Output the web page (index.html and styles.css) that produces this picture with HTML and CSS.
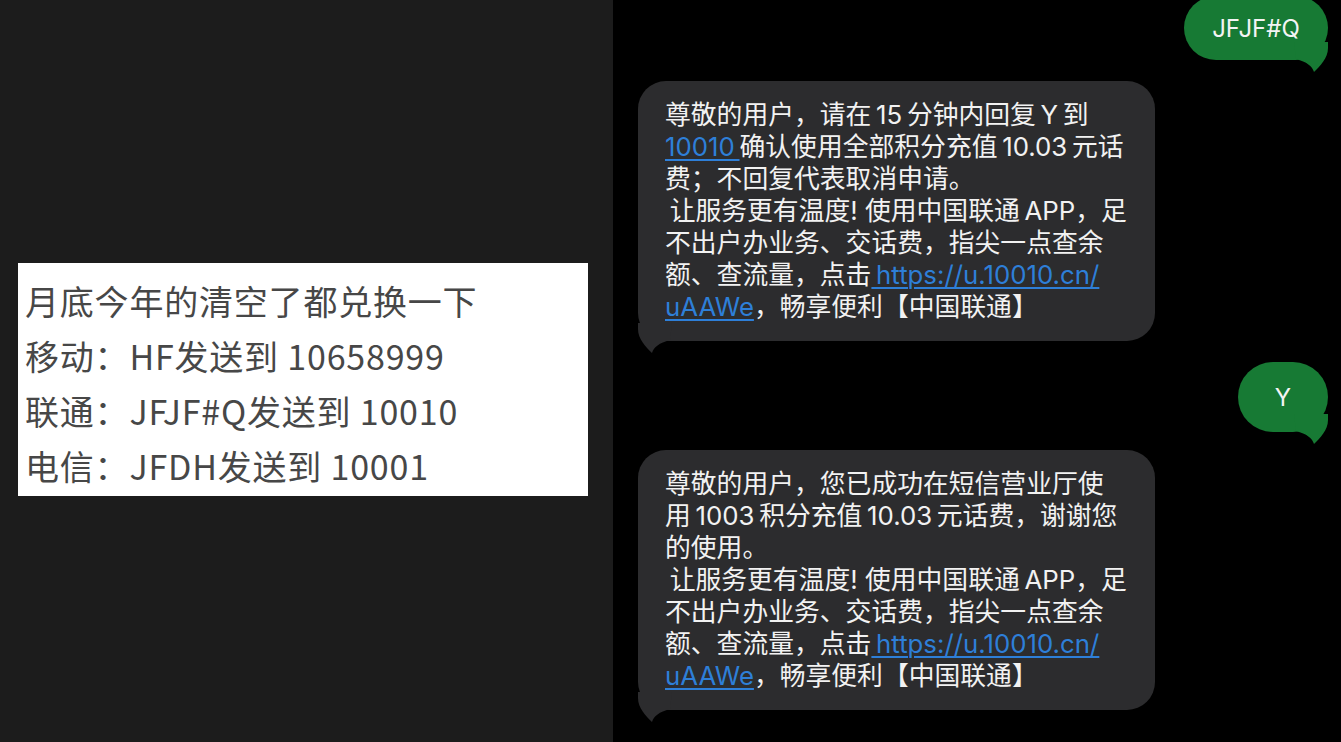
FILE: index.html
```html
<!DOCTYPE html>
<html lang="zh-CN">
<head>
    <meta charset="UTF-8">
    <meta name="viewport" content="width=device-width, initial-scale=1.0">
    <title>积分兑换话费</title>
    <link rel="stylesheet" href="styles.css">
</head>
<body>
    <div class="page">
        <div class="left-panel">
            <div class="note">
                <p>月底今年的清空了都兑换一下</p>
                <p>移动：HF发送到 10658999</p>
                <p>联通：JFJF#Q发送到 10010</p>
                <p>电信：JFDH发送到 10001</p>
            </div>
        </div>

        <div class="chat">
            <div class="bubble out out-first">
                JFJF#Q
                <svg class="tail tail-out" width="34" height="30" viewBox="0 0 34 30"><path d="M34 0 L34 6 C34 16 26 24 20 30 C18 24 13 20 2 17 L0 0 Z"/></svg>
            </div>

            <div class="bubble in">
                <span class="line">尊敬的用户，请在&thinsp;15&thinsp;分钟内回复&thinsp;Y&thinsp;到</span>
                <span class="line"><a href="#">10010&thinsp;</a>确认使用全部积分充值&thinsp;10.03&thinsp;元话</span>
                <span class="line">费；不回复代表取消申请。</span>
                <span class="line">&thinsp;让服务更有温度! 使用中国联通&thinsp;APP，足</span>
                <span class="line">不出户办业务、交话费，指尖一点查余</span>
                <span class="line">额、查流量，点击<a href="#">&thinsp;https://u.10010.cn/</a></span>
                <span class="line"><a href="#">uAAWe</a>，畅享便利【中国联通】</span>
                <svg class="tail tail-in" width="34" height="30" viewBox="0 0 34 30"><path d="M0 0 L0 6 C0 16 8 24 14 30 C16 24 21 20 32 17 L34 0 Z"/></svg>
            </div>

            <div class="bubble out out-second">
                Y
                <svg class="tail tail-out" width="34" height="30" viewBox="0 0 34 30"><path d="M34 0 L34 6 C34 16 26 24 20 30 C18 24 13 20 2 17 L0 0 Z"/></svg>
            </div>

            <div class="bubble in in-second">
                <span class="line">尊敬的用户，您已成功在短信营业厅使</span>
                <span class="line">用&thinsp;1003&thinsp;积分充值&thinsp;10.03&thinsp;元话费，谢谢您</span>
                <span class="line">的使用。</span>
                <span class="line">&thinsp;让服务更有温度! 使用中国联通&thinsp;APP，足</span>
                <span class="line">不出户办业务、交话费，指尖一点查余</span>
                <span class="line">额、查流量，点击<a href="#">&thinsp;https://u.10010.cn/</a></span>
                <span class="line"><a href="#">uAAWe</a>，畅享便利【中国联通】</span>
                <svg class="tail tail-in" width="34" height="30" viewBox="0 0 34 30"><path d="M0 0 L0 6 C0 16 8 24 14 30 C16 24 21 20 32 17 L34 0 Z"/></svg>
            </div>
        </div>
    </div>
</body>
</html>
```

FILE: styles.css
```css
body {
    margin: 0;
    background-color: #000;
    font-family: "Inter", "Noto Sans CJK SC", sans-serif;
    overflow: hidden;
}
.page {
    display: flex;
    height: 742px;
}

/* captura de la izquierda */
.left-panel {
    width: 613px;
    flex-shrink: 0;
    background-color: #1c1c1c;
    padding: 263px 25px 0 18px;
    box-sizing: border-box;
}
.note {
    background-color: #fff;
    height: 233px;
    padding: 10px 0 0 7px;
    box-sizing: border-box;
}
.note p {
    margin: 0;
    font-family: "Noto Sans CJK SC", sans-serif;
    font-size: 34px;
    line-height: 55px;
    color: #474747;
    letter-spacing: 0.8px;
    white-space: nowrap;
}

/* conversación */
.chat {
    flex: 1;
    display: flex;
    flex-direction: column;
    align-items: flex-start;
    padding: 0 13px 0 25px;
}
.bubble {
    position: relative;
}
.bubble .tail {
    position: absolute;
    bottom: -12px;
}
.bubble.in {
    width: 517px;
    box-sizing: border-box;
    background-color: #2c2c2e;
    border-radius: 28px;
    padding: 18px 0 18px 27px;
    margin-top: 21px;
    color: #f2f2f2;
    font-size: 25.8px;
    line-height: 32px;
}
.bubble.in-second {
    margin-top: 18px;
}
.line {
    display: block;
    white-space: nowrap;
}
.line a {
    color: #2e7fd8;
    text-decoration: underline;
    text-decoration-thickness: 2px;
    text-underline-offset: 3px;
}
.tail-in {
    left: 0;
    fill: #2c2c2e;
}
.bubble.out {
    align-self: flex-end;
    background-color: #177a34;
    color: #f4f4f4;
    font-size: 24px;
    display: flex;
    align-items: center;
    justify-content: center;
}
.out-first {
    width: 144px;
    height: 64px;
    border-radius: 32px;
    margin-top: -4px;
}
.out-second {
    width: 90px;
    height: 70px;
    border-radius: 35px;
    margin-top: 21px;
}
.tail-out {
    right: 0;
    fill: #177a34;
}
```
